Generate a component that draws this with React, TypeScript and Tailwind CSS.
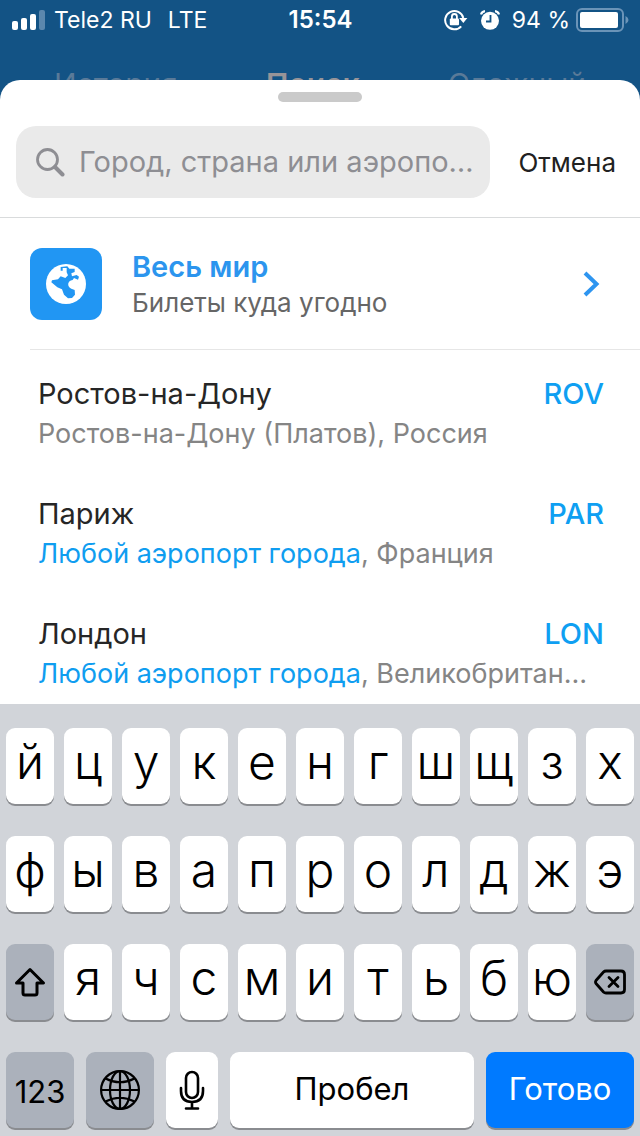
import React from "react";

const keyBase =
  "flex h-[76px] items-center justify-center rounded-[9px] text-black shadow-[0_2px_0_#8a8c90]";

function StatusBar() {
  return (
    <div className="grid h-10 grid-cols-[1fr_auto_1fr] items-center pl-3 pr-[11px] text-[23px] leading-7 text-white">
      <div className="flex items-center">
        <svg width="34" height="20" viewBox="0 0 34 20" aria-hidden="true">
          <rect x="0" y="11" width="6" height="9" rx="2" fill="#fff" />
          <rect x="9" y="8" width="6" height="12" rx="2" fill="#fff" />
          <rect x="18" y="4" width="6" height="16" rx="2" fill="#fff" />
          <rect x="27" y="0" width="6" height="20" rx="2" fill="#5b87ad" />
        </svg>
        <span className="ml-2">Tele2 RU</span>
        <span className="ml-4">LTE</span>
      </div>
      <span className="text-[24px] font-semibold">15:54</span>
      <div className="flex items-center justify-end">
        <svg width="24" height="22" viewBox="0 0 24 22" fill="none" aria-hidden="true">
          <path d="M17.2 17.3 A9.2 9.2 0 1 1 19.3 9" stroke="#fff" strokeWidth="2" />
          <path d="M15.2 9 H23.4 L19.3 14 Z" fill="#fff" />
          <rect x="5.8" y="9.5" width="9.2" height="6.8" rx="1" fill="#fff" />
          <path d="M7.9 10 V7.5 a2.5 2.5 0 0 1 5 0 V10" stroke="#fff" strokeWidth="1.8" />
        </svg>
        <svg className="ml-3" width="20" height="20" viewBox="0 0 20 20" fill="none" aria-hidden="true">
          <circle cx="10" cy="10.8" r="9" fill="#fff" />
          <path d="M1 4.5 Q2 1.5 5 1.2 M19 4.5 Q18 1.5 15 1.2" stroke="#fff" strokeWidth="2.2" />
          <path d="M10.5 5 V11.5 H6" stroke="#135385" strokeWidth="1.8" />
        </svg>
        <span className="ml-3 whitespace-nowrap">94 %</span>
        <svg className="ml-1.5" width="53" height="24" viewBox="0 0 53 24" fill="none" aria-hidden="true">
          <rect x="1" y="1" width="46" height="22" rx="5" stroke="#6b94b8" strokeWidth="2" />
          <rect x="4" y="4" width="38" height="16" rx="2" fill="#fff" />
          <path d="M49.5 8 Q52.5 9.5 52.5 12 T49.5 16 Z" fill="#6b94b8" />
        </svg>
      </div>
    </div>
  );
}

function GlobeTile() {
  return (
    <span className="flex size-[72px] shrink-0 items-center justify-center rounded-xl bg-[#2196f3]">
      <svg width="40" height="40" viewBox="0 0 120 120" aria-hidden="true">
        <circle cx="60" cy="60" r="60" fill="#fff" />
        <path
          d="M44 9 L64 7 L70 14 L86 14 L86 24 L76 28 L78 37 L92 33 L99 38 L96 47 L84 42 L80 48 C64 50 62 68 76 74 L86 78 L87 92 L78 102 L66 103 L54 92 L48 76 L34 70 L16 55 L18 49 L36 46 L44 37 L58 42 L66 34 L62 25 L62 12 L50 12 L50 20 L44 20 Z"
          fill="#2196f3"
        />
      </svg>
    </span>
  );
}

const cities = [
  { name: "Ростов-на-Дону", code: "ROV", link: "", rest: "Ростов-на-Дону (Платов), Россия" },
  { name: "Париж", code: "PAR", link: "Любой аэропорт города", rest: ", Франция" },
  { name: "Лондон", code: "LON", link: "Любой аэропорт города", rest: ", Великобритан…" },
];

function Letter({ children }: { children: string }) {
  return (
    <button type="button" className={`${keyBase} min-w-0 flex-1 bg-white pb-2 text-[48px] leading-none font-light`}>
      {children}
    </button>
  );
}

function Keyboard() {
  return (
    <section aria-label="Клавиатура" className="flex flex-col gap-8 bg-[#d1d4d9] px-1.5 pt-6 pb-2">
      {["йцукенгшщзх", "фывапролджэ"].map((row) => (
        <div key={row} className="flex gap-2.5">
          {row.split("").map((c) => (
            <Letter key={c}>{c}</Letter>
          ))}
        </div>
      ))}
      <div className="flex gap-2.5">
        <button type="button" aria-label="Shift" className={`${keyBase} min-w-0 flex-1 bg-[#abb1bb]`}>
          <svg width="32" height="30" viewBox="0 0 32 30" fill="none" stroke="#000" strokeWidth="3" strokeLinejoin="round" aria-hidden="true">
            <path d="M16 2.5 L29.5 16 H23 V26 Q23 28 21 28 H11 Q9 28 9 26 V16 H2.5 Z" />
          </svg>
        </button>
        {"ячсмитьбю".split("").map((c) => (
          <Letter key={c}>{c}</Letter>
        ))}
        <button type="button" aria-label="Удалить" className={`${keyBase} min-w-0 flex-1 bg-[#abb1bb]`}>
          <svg width="32" height="26" viewBox="0 0 32 26" fill="none" stroke="#000" strokeWidth="2.8" strokeLinejoin="round" strokeLinecap="round" aria-hidden="true">
            <path d="M12 2 H27 Q30.5 2 30.5 5.5 V20.5 Q30.5 24 27 24 H12 Q10.5 24 9.5 23 L2 14.5 Q1 13 2 11.5 L9.5 3 Q10.5 2 12 2 Z" />
            <path d="M15 8.5 L24 17.5 M24 8.5 L15 17.5" />
          </svg>
        </button>
      </div>
      <div className="flex gap-3">
        <button type="button" className={`${keyBase} w-[68px] bg-[#abb1bb] pt-1 text-[31px]`}>
          123
        </button>
        <button type="button" aria-label="Язык" className={`${keyBase} w-[68px] bg-[#abb1bb]`}>
          <svg width="40" height="40" viewBox="0 0 40 40" fill="none" stroke="#000" strokeWidth="2.2" aria-hidden="true">
            <circle cx="20" cy="20" r="18.9" />
            <ellipse cx="20" cy="20" rx="10" ry="18.9" />
            <path d="M20 1 V39 M1 20 H39 M5.5 8.5 Q20 16 34.5 8.5 M5.5 31.5 Q20 24 34.5 31.5" />
          </svg>
        </button>
        <button type="button" aria-label="Диктовка" className={`${keyBase} w-[52px] bg-white`}>
          <svg width="26" height="40" viewBox="0 0 26 40" fill="none" stroke="#000" strokeWidth="2.6" strokeLinecap="round" aria-hidden="true">
            <rect x="7" y="2" width="12" height="26" rx="6" />
            <path d="M2 18 V21 Q2 32 13 32 Q24 32 24 21 V18 M13 32 V38 M7 38.5 H19" />
          </svg>
        </button>
        <button type="button" className={`${keyBase} min-w-0 flex-1 bg-white pb-0.5 text-[31px]`}>
          Пробел
        </button>
        <button type="button" className={`${keyBase} w-[148px] bg-[#007aff] pb-0.5 text-[31px] text-white`}>
          Готово
        </button>
      </div>
    </section>
  );
}

export default function App() {
  return (
    <div className="bg-[#135385] font-['Inter','Liberation_Sans',sans-serif]">
      <StatusBar />
      <nav className="flex h-[60px] justify-between px-[54px] pt-[26px] text-[30px] leading-9 text-[#5a7a98]">
        <a href="#history">История</a>
        <a href="#search" className="font-semibold text-[#989498]">Поиск</a>
        <a href="#complex">Сложный</a>
      </nav>
      <main className="relative -mt-5 rounded-t-[20px] bg-white">
        <div className="flex justify-center pt-3">
          <span className="h-2.5 w-[84px] rounded-full bg-[#cacaca]" />
        </div>
        <form className="flex items-center border-b border-[#d9dbdc] pt-6 pr-6 pb-[19px] pl-4">
          <label className="flex h-[72px] min-w-0 flex-1 items-center rounded-[20px] bg-[#eaeaea] pr-3 pl-5">
            <svg className="shrink-0" width="29" height="29" viewBox="0 0 29 29" fill="none" stroke="#8e8e93" strokeLinecap="round" aria-hidden="true">
              <circle cx="11.5" cy="11.5" r="10" strokeWidth="2.8" />
              <path d="M19 19 L26.5 26.5" strokeWidth="4" />
            </svg>
            <input
              type="text"
              aria-label="Город, страна или аэропорт"
              placeholder="Город, страна или аэропо…"
              className="ml-3.5 min-w-0 flex-1 bg-transparent text-[29px] text-[#8e8e93] outline-none placeholder:text-[#8e8e93]"
            />
          </label>
          <button type="button" className="ml-7 text-[26px] text-[#212121]">Отмена</button>
        </form>
        <a href="#anywhere" className="ml-[30px] flex items-center border-b border-[#e6e6e6] pt-[30px] pr-10 pb-[29px]">
          <GlobeTile />
          <span className="ml-[30px] flex flex-1 flex-col">
            <span className="text-[29px] leading-[38px] font-semibold text-[#2c95ee]">Весь мир</span>
            <span className="text-[26px] leading-[34px] text-[#666]">Билеты куда угодно</span>
          </span>
          <svg width="17" height="26" viewBox="0 0 17 26" fill="none" stroke="#2e95f0" strokeWidth="4" aria-hidden="true">
            <path d="M2 2 L13.5 13 L2 24" />
          </svg>
        </a>
        <ul className="pt-1">
          {cities.map((c) => (
            <li key={c.name} className="last:-mb-2.5">
              <a href={`#${c.code}`} className="block py-5 pr-9 pl-[38px] leading-10">
                <span className="flex justify-between text-[29px]">
                  <span className="text-[#262626]">{c.name}</span>
                  <span className="font-medium text-[#0f9ff2]">{c.code}</span>
                </span>
                <span className="block truncate text-[27px] text-[#858585]">
                  {c.link && <span className="text-[#0f9df0]">{c.link}</span>}
                  {c.rest}
                </span>
              </a>
            </li>
          ))}
        </ul>
      </main>
      <div className="relative">
        <Keyboard />
      </div>
    </div>
  );
}
